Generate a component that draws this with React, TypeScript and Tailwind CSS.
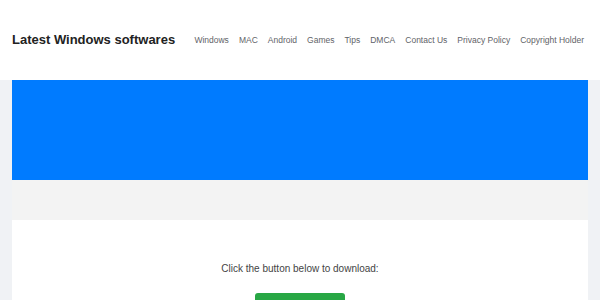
export default function App() {
  const links = ['Windows', 'MAC', 'Android', 'Games', 'Tips', 'DMCA', 'Contact Us', 'Privacy Policy', 'Copyright Holder']
  return (
    <div className="min-h-screen overflow-hidden bg-[#f0f2f5]" style={{ fontFamily: '"Liberation Sans", Arial, sans-serif' }}>
      <header className="flex h-[80px] items-center bg-white px-[12px]">
        <a className="text-[13px] font-bold text-[#222]">Latest Windows softwares</a>
        <nav className="ml-auto flex gap-[10px] pr-[4px]">
          {links.map((l) => (
            <a key={l} className="text-[8.5px] text-[#5f6368]">
              {l}
            </a>
          ))}
        </nav>
      </header>
      <main className="mx-[12px] bg-[#f3f3f3]">
        <div className="h-[100px] bg-[#007bff]" />
        <div className="h-[40px]" />
        <div className="flex flex-col items-center bg-white pt-[43px] pb-[40px]">
          <p className="text-[10px] leading-[12px] text-[#444]">Click the button below to download:</p>
          <button aria-label="Download" className="mt-[18px] h-[30px] w-[90px] rounded-[3px] bg-[#28a745]" />
        </div>
      </main>
    </div>
  )
}
